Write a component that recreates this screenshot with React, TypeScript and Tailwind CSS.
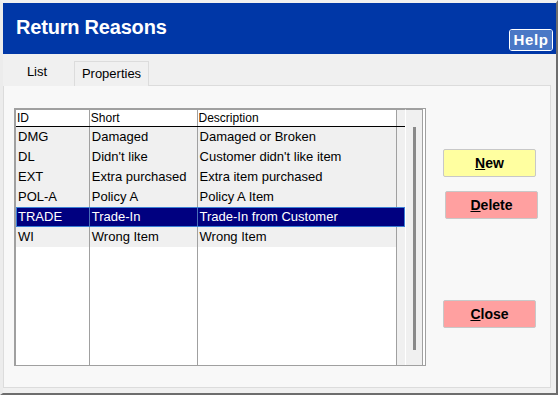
const rows = [
  { id: "DMG", short: "Damaged", desc: "Damaged or Broken" },
  { id: "DL", short: "Didn't like", desc: "Customer didn't like item" },
  { id: "EXT", short: "Extra purchased", desc: "Extra item purchased" },
  { id: "POL-A", short: "Policy A", desc: "Policy A Item" },
  { id: "TRADE", short: "Trade-In", desc: "Trade-In from Customer", selected: true },
  { id: "WI", short: "Wrong Item", desc: "Wrong Item" },
];

const font = { fontFamily: '"Liberation Sans", Arial, sans-serif' };

const Btn = ({ label, rest, color, className }: { label: string; rest: string; color: string; className?: string }) => (
  <button
    className={`h-[28px] w-[93px] rounded-[2px] border border-[#c8c8c8] text-[14px] font-bold text-black ${color} ${className ?? ""}`}
  >
    <span className="underline">{label}</span>
    {rest}
  </button>
);

const App = () => {
  return (
    <div
      className="w-[558px] h-[395px] bg-[#f0f0f0] border-t-[3px] border-l-[3px] border-r-2 border-b-2 border-t-[#f0f0f0] border-l-[#ececec] border-r-[#6d6d6d] border-b-[#6d6d6d] flex flex-col pb-[5px]"
      style={font}
    >
      {/* header */}
      <div className="h-[51px] shrink-0 bg-[#0037a7] flex items-start justify-between pl-[13px] pr-[3px]">
        <div className="text-white text-[20px] font-bold mt-[9px] tracking-[-0.2px]">Return Reasons</div>
        <div className="mt-[26px] border border-white rounded-[3px]">
          <div className="bg-[#4a78c6] rounded-[2px] h-[20px] w-[42px] flex items-center justify-center text-white text-[15px] font-bold tracking-[0.6px]">
            Help
          </div>
        </div>
      </div>

      {/* tabs */}
      <div className="h-[32px] shrink-0 flex items-end pr-[5px]">
        <div className="w-[71px] h-full flex items-center justify-center text-[13px] text-black pt-[3px] pr-[3px]">List</div>
        <div className="w-[75px] h-[25px] border border-b-0 border-[#dcdcdc] bg-[#f0f0f0] flex items-center justify-center text-[13px] text-black">
          Properties
        </div>
        <div className="flex-1 border-b border-[#dcdcdc]" />
      </div>

      {/* panel */}
      <div className="flex-1 mr-[5px] border border-t-0 border-[#dcdcdc] bg-[#f8f8f8] flex pl-[10px] pt-[22px]">
        <div className="w-[412px] h-[258px] border border-[#a0a0a0] bg-white flex">
          <div className="w-[390px] flex flex-col border-l border-t border-[#a0a0a0] bg-white">
            {/* header row */}
            <div className="h-[17px] flex border-b border-black text-[12px] text-black leading-[16px]">
              <div className="w-[74px] border-r border-[#a0a0a0] pl-[1px]">ID</div>
              <div className="w-[108px] border-r border-[#a0a0a0] pl-[1px]">Short</div>
              <div className="w-[200px] border-r border-[#a0a0a0] pl-[1px]">Description</div>
              <div className="w-[8px] bg-[#f0f0f0]" />
            </div>
            {rows.map((r) =>
              r.selected ? (
                <div
                  key={r.id}
                  className="h-[20px] flex bg-[#000080] text-white text-[13px] leading-[20px] outline-1 outline-[#3c80d4] -outline-offset-1"
                >
                  <div className="w-[74px] border-r border-[#4a6fb8] pl-[2px]">{r.id}</div>
                  <div className="w-[108px] border-r border-[#4a6fb8] pl-[2px]">{r.short}</div>
                  <div className="w-[208px] pl-[2px]">{r.desc}</div>
                </div>
              ) : (
                <div key={r.id} className="h-[20px] flex bg-[#f0f0f0] text-black text-[13px] leading-[20px]">
                  <div className="w-[74px] border-r border-[#a0a0a0] pl-[2px]">{r.id}</div>
                  <div className="w-[108px] border-r border-[#a0a0a0] pl-[2px]">{r.short}</div>
                  <div className="w-[200px] border-r border-[#a0a0a0] pl-[2px] whitespace-nowrap">{r.desc}</div>
                  <div className="w-[8px]" />
                </div>
              )
            )}
            <div className="flex-1 flex">
              <div className="w-[74px] border-r border-[#a0a0a0]" />
              <div className="w-[108px] border-r border-[#a0a0a0]" />
              <div className="w-[200px] border-r border-[#a0a0a0]" />
              <div className="w-[8px] bg-[#f0f0f0]" />
            </div>
          </div>
          <div className="w-[17px] bg-[#f0f0f0] border-l border-white border-t border-t-[#a0a0a0] flex justify-center pt-[17px] pb-[15px]">
            <div className="w-[3px] bg-[#8a8a8a] ml-[1px]" />
          </div>
          <div className="flex-1 border-l border-[#a0a0a0]" />
        </div>

        <div className="flex flex-col ml-[17px] pt-[41px]">
          <Btn label="N" rest="ew" color="bg-[#ffffa0]" />
          <Btn label="D" rest="elete" color="bg-[#ffa0a0]" className="mt-[14px] ml-[2px]" />
          <Btn label="C" rest="lose" color="bg-[#ffa0a0]" className="mt-[81px]" />
        </div>
      </div>
    </div>
  );
};

export default App;
